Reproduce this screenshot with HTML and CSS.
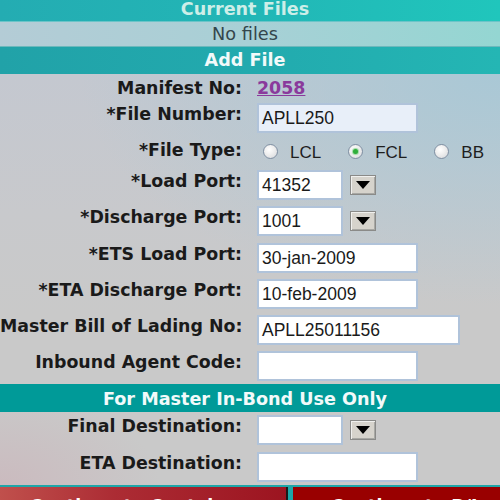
FILE: index.html
```html
<!DOCTYPE html>
<html>
<head>
<meta charset="utf-8">
<link rel="stylesheet" href="styles.css">
</head>
<body>
<div class="page">
  <div class="hdr hdr-current">Current Files</div>
  <div class="nofiles">No files</div>
  <div class="hdr hdr-add">Add File</div>
  <div class="form">
    <div class="row row-manifest">
      <div class="lbl">Manifest No:</div>
      <div class="val"><a class="mlink" href="#">2058</a></div>
    </div>
    <div class="row">
      <div class="lbl">*File Number:</div>
      <div class="val"><span class="inp w161 focus">APLL250</span></div>
    </div>
    <div class="row row-type">
      <div class="lbl">*File Type:</div>
      <div class="val radios">
        <span class="radio"></span><span class="rlbl">LCL</span>
        <span class="radio checked"></span><span class="rlbl">FCL</span>
        <span class="radio"></span><span class="rlbl">BB</span>
      </div>
    </div>
    <div class="row">
      <div class="lbl">*Load Port:</div>
      <div class="val"><span class="inp w86">41352</span><span class="dd"><i></i></span></div>
    </div>
    <div class="row tall">
      <div class="lbl">*Discharge Port:</div>
      <div class="val"><span class="inp w86">1001</span><span class="dd"><i></i></span></div>
    </div>
    <div class="row">
      <div class="lbl">*ETS Load Port:</div>
      <div class="val"><span class="inp w161">30-jan-2009</span></div>
    </div>
    <div class="row">
      <div class="lbl">*ETA Discharge Port:</div>
      <div class="val"><span class="inp w161">10-feb-2009</span></div>
    </div>
    <div class="row">
      <div class="lbl">Master Bill of Lading No:</div>
      <div class="val"><span class="inp w203">APLL25011156</span></div>
    </div>
    <div class="row">
      <div class="lbl">Inbound Agent Code:</div>
      <div class="val"><span class="inp w161"></span></div>
    </div>
    <div class="hdr hdr-bond">For Master In-Bond Use Only</div>
    <div class="row tall">
      <div class="lbl">Final Destination:</div>
      <div class="val"><span class="inp w86"></span><span class="dd"><i></i></span></div>
    </div>
    <div class="row">
      <div class="lbl">ETA Destination:</div>
      <div class="val"><span class="inp w161"></span></div>
    </div>
  </div>
  <div class="buttons">
    <div class="btn btn-left">Continue to Containers</div>
    <div class="sep"></div>
    <div class="btn btn-right">Continue to B/L</div>
  </div>
</div>
</body>
</html>
```
FILE: styles.css
```css
html, body {
  margin: 0;
  padding: 0;
  background: #c8c8c8;
}
.page {
  width: 500px;
  height: 500px;
  overflow: hidden;
  font-family: "DejaVu Sans", Verdana, sans-serif;
  display: flex;
  flex-direction: column;
}
.page > * {
  flex: none;
}
.hdr {
  font-weight: bold;
  font-size: 17.6px;
  text-align: center;
  padding-right: 10px;
}
.hdr-current {
  height: 21px;
  line-height: 18px;
  color: #cdeee8;
  background: linear-gradient(90deg, #24acb2 0%, #22b6b6 50%, #20c6bc 100%);
  border-bottom: 1px solid #6cc4c8;
}
.nofiles {
  height: 24px;
  line-height: 25px;
  font-size: 17.7px;
  color: #34464c;
  text-align: center;
  padding-right: 10px;
  background: linear-gradient(90deg, #b4ccd6 0%, #a8d0d6 50%, #94d6d2 100%);
  border-bottom: 1px solid #6cb8bc;
}
.hdr-add {
  height: 27px;
  line-height: 27px;
  color: #f2fafa;
  background: linear-gradient(90deg, #21a2a8 0%, #22aaae 50%, #24b6b4 100%);
}
.form {
  display: flex;
  flex-direction: column;
  background:
    radial-gradient(ellipse 160px 90px at 0% 100%, rgba(204, 172, 180, 0.5), rgba(204, 172, 180, 0) 100%),
    radial-gradient(ellipse 420px 230px at 100% 0%, rgba(168, 200, 214, 0.95), rgba(168, 200, 214, 0) 100%),
    linear-gradient(180deg, #c4c8d0 0px, #c8c9cc 140px, #c9c9c9 240px, #c9c9c9 100%);
}
.row {
  display: grid;
  grid-template-columns: 242px 1fr;
  column-gap: 15px;
  height: 36px;
  flex: none;
}
.row.tall {
  height: 37px;
}
.row-manifest {
  height: 26px;
}
.row-type {
  height: 31px;
}
.lbl {
  font-weight: bold;
  font-size: 17.4px;
  line-height: 20px;
  color: #1a1a1a;
  text-align: right;
  white-space: nowrap;
  padding-top: 4px;
}
.val {
  display: flex;
  align-items: flex-start;
  padding-top: 3px;
}
.row-manifest .val {
  padding-top: 4px;
}
.mlink {
  font-weight: bold;
  font-size: 17.4px;
  line-height: 20px;
  color: #8a3a9c;
  text-decoration: underline;
}
.inp {
  box-sizing: border-box;
  height: 30px;
  border: 2px solid #b0c3da;
  background: #ffffff;
  font-family: "Liberation Sans", Arial, sans-serif;
  font-size: 17.5px;
  line-height: 26px;
  color: #1a1a1a;
  padding-left: 3px;
  white-space: nowrap;
  overflow: hidden;
}
.inp.focus {
  background: #e8eff9;
}
.w161 { width: 161px; }
.w86 { width: 86px; }
.w203 { width: 203px; }
.dd {
  box-sizing: border-box;
  width: 26px;
  height: 20px;
  margin-left: 7px;
  margin-top: 5px;
  background: #d6d3cc;
  border: 1px solid #8a8a88;
  box-shadow: inset 1px 1px 0 #f0f0ee, inset -1px -1px 0 #a8a8a4;
  display: flex;
  align-items: center;
  justify-content: center;
}
.dd i {
  display: block;
  width: 0;
  height: 0;
  border-left: 7px solid transparent;
  border-right: 7px solid transparent;
  border-top: 8px solid #000;
}
.radios {
  align-items: center;
  padding-top: 0;
  height: 31px;
}
.radio {
  box-sizing: border-box;
  width: 15px;
  height: 15px;
  border-radius: 50%;
  border: 1px solid #7f8fa2;
  background: radial-gradient(circle at 40% 35%, #ffffff 0%, #eeeeee 45%, #d4d6da 100%);
  display: flex;
  align-items: center;
  justify-content: center;
  margin-left: 27px;
}
.radio:first-child {
  margin-left: 6px;
}
.radio.checked::after {
  content: "";
  width: 5px;
  height: 5px;
  border-radius: 50%;
  background: #2fae3a;
  box-shadow: 0 0 1px 1px #9ad8a0;
}
.rlbl {
  margin-left: 12px;
  font-family: "Liberation Sans", Arial, sans-serif;
  font-size: 17px;
  color: #1e1e1e;
  line-height: 20px;
  padding-top: 3px;
}
.hdr-bond {
  height: 28px;
  box-sizing: border-box;
  padding-top: 3px;
  line-height: 25px;
  color: #f2fafa;
  background: #009a98;
  flex: none;
}
.buttons {
  height: 30px;
  border-top: 2px solid #1ea6a8;
  display: flex;
}
.btn {
  height: 30px;
  box-sizing: border-box;
  padding-top: 9px;
  line-height: 20px;
  font-weight: bold;
  font-size: 17.4px;
  color: #ffffff;
  text-align: center;
  white-space: nowrap;
}
.btn-left {
  width: 286px;
  background: linear-gradient(90deg, #c0504c 0%, #ac2c34 40%, #9c1420 100%);
}
.sep {
  width: 7px;
  border-left: 2px solid #1a1a1a;
  box-sizing: border-box;
  background: #1ea6a8;
}
.btn-right {
  flex: 1;
  background: #990000;
  padding-left: 20px;
}
```
